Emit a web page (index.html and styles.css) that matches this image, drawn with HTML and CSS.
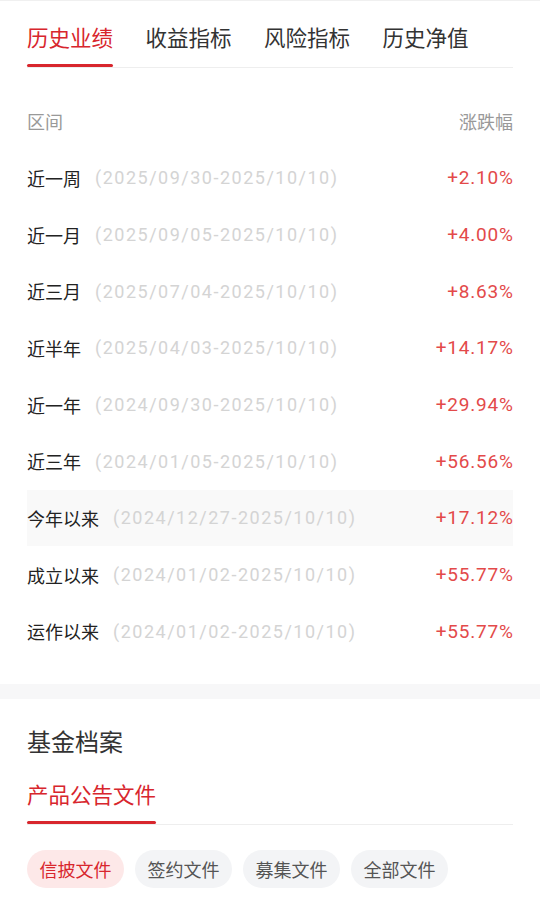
FILE: index.html
```html
<!DOCTYPE html>
<html>
<head>
<meta charset="UTF-8">
<title>历史业绩</title>
<link rel="stylesheet" href="styles.css">
</head>
<body>
	<div class="top">
		<div class="tabs">
			<span class="tab on">历史业绩</span>
			<span class="tab">收益指标</span>
			<span class="tab">风险指标</span>
			<span class="tab">历史净值</span>
		</div>
		<div class="list">
			<div class="row head">
				<span>区间</span>
				<span>涨跌幅</span>
			</div>
			<div class="row"><span class="name">近一周</span><span class="date">(2025/09/30-2025/10/10)</span><span class="val">+2.10%</span></div>
			<div class="row"><span class="name">近一月</span><span class="date">(2025/09/05-2025/10/10)</span><span class="val">+4.00%</span></div>
			<div class="row"><span class="name">近三月</span><span class="date">(2025/07/04-2025/10/10)</span><span class="val">+8.63%</span></div>
			<div class="row"><span class="name">近半年</span><span class="date">(2025/04/03-2025/10/10)</span><span class="val">+14.17%</span></div>
			<div class="row"><span class="name">近一年</span><span class="date">(2024/09/30-2025/10/10)</span><span class="val">+29.94%</span></div>
			<div class="row"><span class="name">近三年</span><span class="date">(2024/01/05-2025/10/10)</span><span class="val">+56.56%</span></div>
			<div class="row hl"><span class="name">今年以来</span><span class="date">(2024/12/27-2025/10/10)</span><span class="val">+17.12%</span></div>
			<div class="row"><span class="name">成立以来</span><span class="date">(2024/01/02-2025/10/10)</span><span class="val">+55.77%</span></div>
			<div class="row"><span class="name">运作以来</span><span class="date">(2024/01/02-2025/10/10)</span><span class="val">+55.77%</span></div>
		</div>
	</div>
	<div class="band"></div>
	<div class="files">
		<h3>基金档案</h3>
		<div class="tabs sub">
			<span class="tab on">产品公告文件</span>
		</div>
		<div class="chips">
			<span class="chip on">信披文件</span>
			<span class="chip">签约文件</span>
			<span class="chip">募集文件</span>
			<span class="chip">全部文件</span>
		</div>
	</div>
</body>
</html>
```

FILE: styles.css
```css
body{
	margin: 0;
	background: #fff;
	font-family: "Noto Sans CJK SC", sans-serif;
	color: #222;
}
.top{
	border-top: 1px solid #f0f0f0;
	padding: 0 27px 24px;
}
.tabs{
	display: flex;
	gap: 32.5px;
	border-bottom: 1px solid #eee;
}
.tab{
	position: relative;
	font-size: 21.5px;
	line-height: 30px;
	padding: 21px 0 15px;
	color: #333;
}
.tab.on{
	color: #d8262d;
}
.tab.on::after{
	content: "";
	position: absolute;
	left: 0;
	right: 0;
	bottom: 0;
	height: 3px;
	border-radius: 2px;
	background: #d8262d;
}
.list{
	margin-top: 25px;
}
.row{
	display: flex;
	align-items: center;
	height: 56.67px;
	font-size: 18px;
}
.head{
	justify-content: space-between;
	color: #999;
}
.hl{
	background: #f9f9f9;
}
.name{
	color: #222;
}
.date{
	margin-left: 14px;
	font-family: Roboto, "Noto Sans CJK SC", sans-serif;
	font-size: 18px;
	letter-spacing: 1.5px;
	color: #d4d4d4;
}
.val{
	margin-left: auto;
	font-family: Roboto, "Noto Sans CJK SC", sans-serif;
	font-size: 19px;
	letter-spacing: 0.8px;
	margin-right: -0.8px;
	color: #e34a4a;
}
.band{
	height: 15px;
	background: #f7f7f8;
}
.files{
	padding: 26px 27px 20px;
}
h3{
	margin: 0;
	font-size: 24px;
	line-height: 32px;
	font-weight: normal;
	color: #333;
}
.sub{
	margin-top: 22px;
}
.sub .tab{
	padding: 0 0 15px;
}
.chips{
	display: flex;
	gap: 11px;
	margin-top: 25px;
}
.chip{
	height: 38px;
	line-height: 38px;
	padding: 0 12.5px;
	border-radius: 19px;
	font-size: 18px;
	background: #f3f4f6;
	color: #555;
}
.chip.on{
	background: #fde8e8;
	color: #d8262d;
}
```
